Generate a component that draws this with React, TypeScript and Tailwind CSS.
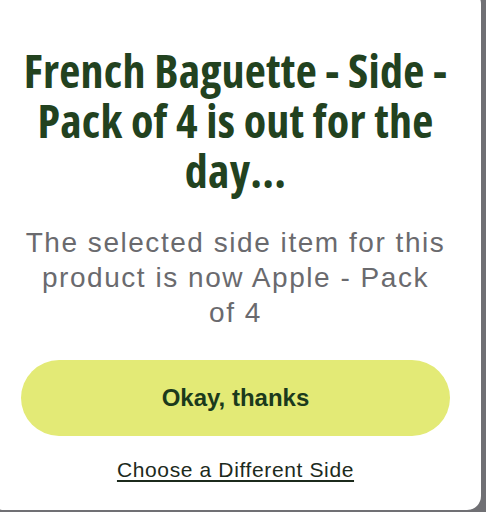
import React from 'react';

const App: React.FC = () => {
  return (
    <div className="w-[486px] h-[512px] overflow-hidden bg-[#707074]">
      <div className="-ml-[10px] -mt-[10px] w-[491px] h-[520px] rounded-[14px] bg-white flex flex-col items-center px-[31px] pt-[55px]">
        <h2 className="text-center text-[46px] leading-[50px] font-bold font-stretch-75% tracking-[0.005em] text-[#22421f] font-['Open_Sans',sans-serif]">
          French Baguette - Side - Pack of 4 is out for the day...
        </h2>
        <p className="mt-[30px] text-center text-[28px] leading-[35px] tracking-[0.055em] text-[#6a6a6e] font-['Liberation_Sans',sans-serif]">
          The selected side item for this product is now Apple - Pack of&nbsp;4
        </p>
        <button className="mt-[30px] w-full h-[76px] shrink-0 rounded-full bg-[#e3ea76] text-[24px] font-bold text-[#1b3a1c] font-['Liberation_Sans',sans-serif]">
          Okay, thanks
        </button>
        <a className="mt-[22px] text-[21px] leading-[24px] tracking-[0.03em] text-[#1c2a1c] underline underline-offset-[3px] font-['Liberation_Sans',sans-serif]">
          Choose a Different Side
        </a>
      </div>
    </div>
  );
};

export default App;
